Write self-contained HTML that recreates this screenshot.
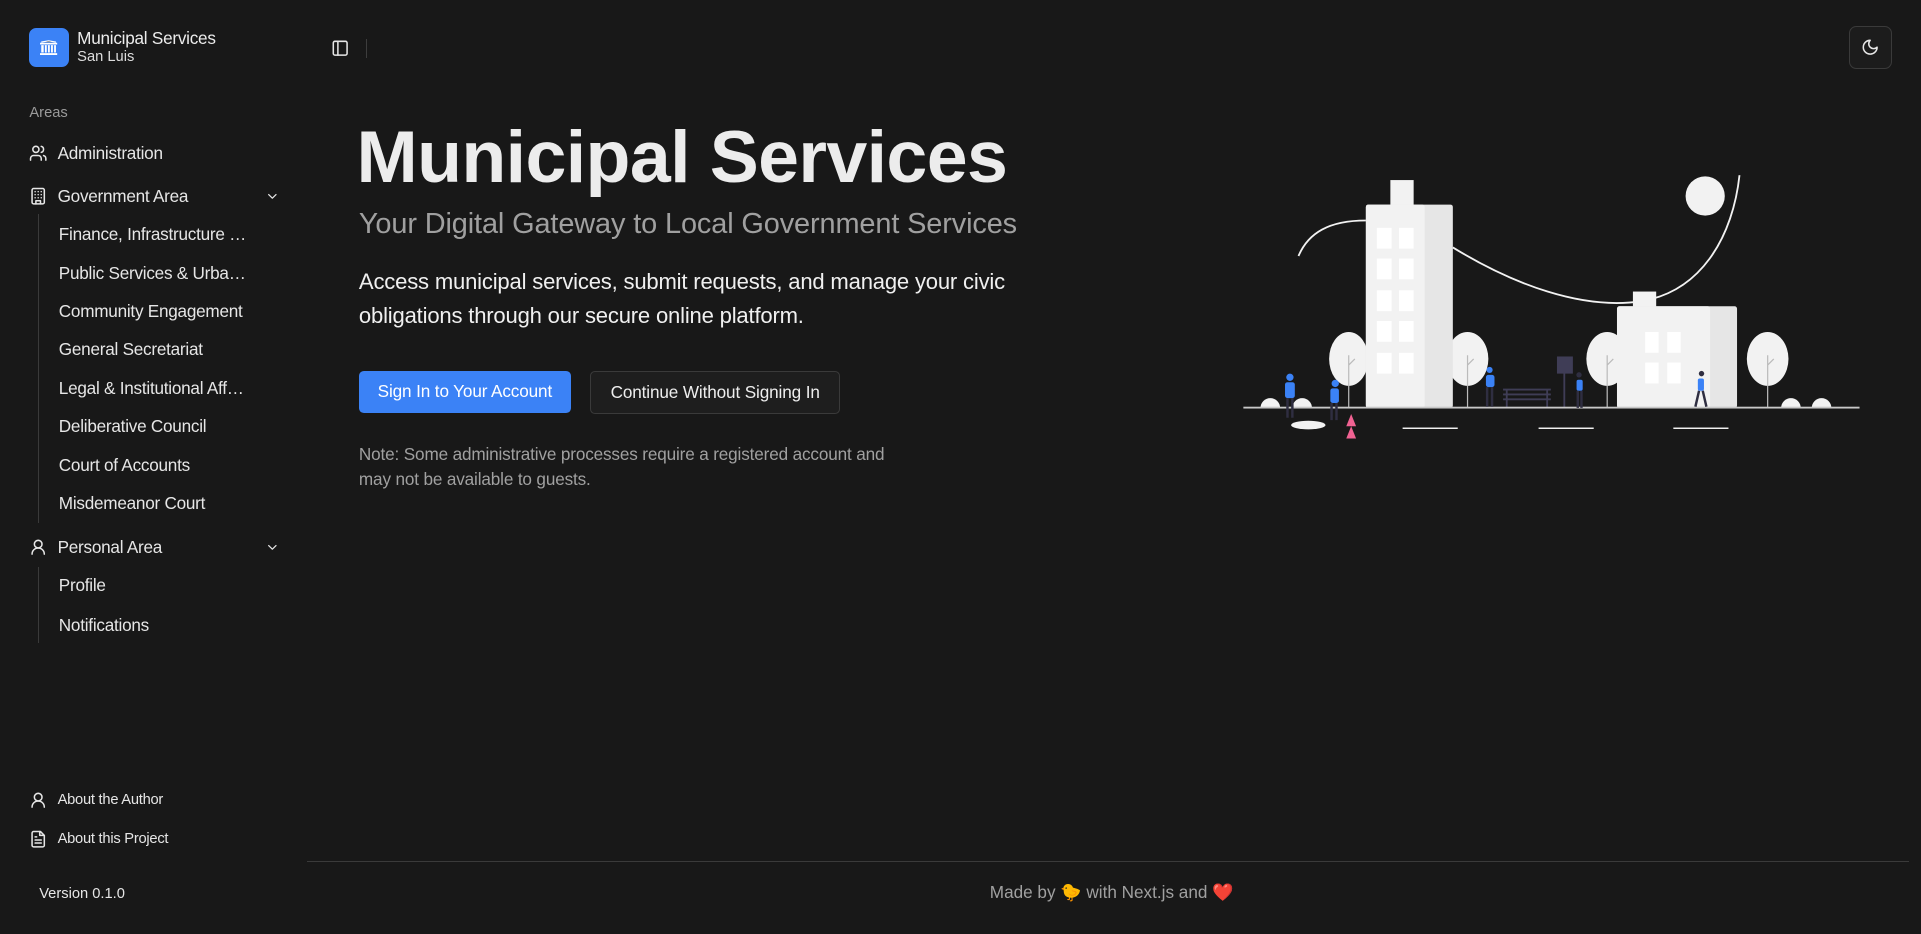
<!DOCTYPE html>
<html><head><meta charset="utf-8">
<style>
html,body{margin:0;padding:0;background:#181818;}
body{zoom:1.225;width:1568px;height:762px;position:relative;overflow:hidden;font-family:"Liberation Sans",sans-serif;color:#e8e8e8;}
.a{position:absolute;white-space:nowrap;}
.side{position:absolute;left:0;top:0;width:251px;height:762px;background:#181818;}
.logo{position:absolute;left:24px;top:23px;width:32px;height:32px;border-radius:6px;background:#3b82f6;}
.it{position:absolute;left:24px;font-size:14px;color:#e6e6e6;display:flex;align-items:center;height:20px;letter-spacing:-0.2px;}
.it svg{width:15px;height:15px;margin-right:8px;}
.sub{position:absolute;left:48px;font-size:14px;color:#e6e6e6;height:20px;line-height:20px;letter-spacing:-0.2px;}
.chev{position:absolute;left:216px;width:12px;height:12px;}
svg.i{fill:none;stroke:#e6e6e6;stroke-width:2;stroke-linecap:round;stroke-linejoin:round;}
</style></head><body>
<div class="side">
  <div class="logo"><svg viewBox="0 0 32 32" width="32" height="32"><path d="M9 12h14v1.5H9zM10 14h12v6H10zM9 20.5h14V22H9z" fill="#fff"/><path d="M12.5 14v6M15 14v6M17.5 14v6M20 14v6" stroke="#3b82f6" stroke-width="1"/><path d="M10 11.5l6-1 6 1" stroke="#fff" stroke-width="1"/></svg></div>
  <div class="a" style="left:63px;top:23px;font-size:14px;color:#ececec;letter-spacing:-0.2px">Municipal Services</div>
  <div class="a" style="left:63px;top:40px;font-size:12px;color:#ddd">San Luis</div>
  <div class="a" style="left:24px;top:86px;font-size:12px;color:#9a9a9a">Areas</div>

  <div class="it" style="top:115px"><svg class="i" viewBox="0 0 24 24"><path d="M16 21v-2a4 4 0 0 0-4-4H6a4 4 0 0 0-4 4v2"/><circle cx="9" cy="7" r="4"/><path d="M22 21v-2a4 4 0 0 0-3-3.87M16 3.13a4 4 0 0 1 0 7.75"/></svg>Administration</div>
  <div class="it" style="top:150px"><svg class="i" viewBox="0 0 24 24"><rect x="4" y="2" width="16" height="20" rx="2"/><path d="M9 22v-4h6v4M8 6h.01M16 6h.01M12 6h.01M12 10h.01M12 14h.01M16 10h.01M16 14h.01M8 10h.01M8 14h.01"/></svg>Government Area</div>
  <svg class="chev i" style="top:154px" viewBox="0 0 24 24"><path d="M6 9l6 6 6-6"/></svg>
  <div class="a" style="left:31px;top:175px;width:1px;height:252px;background:#3a3a3a"></div>
  <div class="sub" style="top:181px">Finance, Infrastructure …</div>
  <div class="sub" style="top:213px">Public Services &amp; Urba…</div>
  <div class="sub" style="top:244px">Community Engagement</div>
  <div class="sub" style="top:275px">General Secretariat</div>
  <div class="sub" style="top:307px">Legal &amp; Institutional Aff…</div>
  <div class="sub" style="top:338px">Deliberative Council</div>
  <div class="sub" style="top:370px">Court of Accounts</div>
  <div class="sub" style="top:401px">Misdemeanor Court</div>

  <div class="it" style="top:437px"><svg class="i" viewBox="0 0 24 24"><circle cx="12" cy="8" r="5"/><path d="M20 21a8 8 0 0 0-16 0"/></svg>Personal Area</div>
  <svg class="chev i" style="top:441px" viewBox="0 0 24 24"><path d="M6 9l6 6 6-6"/></svg>
  <div class="a" style="left:31px;top:463px;width:1px;height:62px;background:#3a3a3a"></div>
  <div class="sub" style="top:468px">Profile</div>
  <div class="sub" style="top:500px">Notifications</div>

  <div class="it" style="top:643px;font-size:12px"><svg class="i" viewBox="0 0 24 24"><circle cx="12" cy="8" r="5"/><path d="M20 21a8 8 0 0 0-16 0"/></svg>About the Author</div>
  <div class="it" style="top:675px;font-size:12px"><svg class="i" viewBox="0 0 24 24"><path d="M15 2H6a2 2 0 0 0-2 2v16a2 2 0 0 0 2 2h12a2 2 0 0 0 2-2V7z"/><path d="M14 2v5h5M16 13H8M16 17H8M10 9H8"/></svg>About this Project</div>
  <div class="a" style="left:32px;top:723px;font-size:12px;color:#e6e6e6">Version 0.1.0</div>
</div>

<svg class="a i" style="left:270px;top:32px;width:15px;height:15px;stroke-width:2" viewBox="0 0 24 24"><rect x="3" y="3" width="18" height="18" rx="2"/><path d="M9 3v18"/></svg>
<div class="a" style="left:299px;top:32px;width:1px;height:15px;background:#3d3d3d"></div>
<div class="a" style="left:1509px;top:21px;width:34px;height:34px;border:1px solid #3a3a3a;border-radius:6px;background:#1c1c1c"></div>
<svg class="a i" style="left:1519px;top:31px;width:15px;height:15px" viewBox="0 0 24 24"><path d="M12 3a6 6 0 0 0 9 9 9 9 0 1 1-9-9z"/></svg>

<div class="a" style="left:291px;top:93px;font-size:60px;font-weight:bold;color:#ececec;letter-spacing:-0.5px">Municipal Services</div>
<div class="a" style="left:293px;top:170px;font-size:23.6px;color:#a0a0a0;letter-spacing:-0.1px">Your Digital Gateway to Local Government Services</div>
<div class="a" style="left:293px;top:216px;font-size:18px;line-height:28px;color:#f0f0f0;letter-spacing:-0.15px">Access municipal services, submit requests, and manage your civic<br>obligations through our secure online platform.</div>
<div class="a" style="left:293px;top:303px;width:173px;height:34px;border-radius:4px;background:#3b82f6;color:#fff;font-size:14px;line-height:34px;text-align:center;letter-spacing:-0.1px">Sign In to Your Account</div>
<div class="a" style="left:482px;top:303px;width:202px;height:33px;border-radius:4px;border:1px solid #3a3a3a;background:#1e1e1e;color:#eee;font-size:14px;line-height:33px;text-align:center;letter-spacing:-0.1px">Continue Without Signing In</div>
<div class="a" style="left:293px;top:361px;font-size:14px;line-height:20px;color:#a0a0a0;letter-spacing:-0.12px">Note: Some administrative processes require a registered account and<br>may not be available to guests.</div>

<svg class="a" style="left:0;top:0;width:1568px;height:762px" viewBox="0 0 1568 762">
  <path d="M1060 209C1068 190 1085 180 1115 180" stroke="#f2f2f2" stroke-width="1.5" fill="none"/>
  <path d="M1186 202C1240 235 1290 250 1330 247C1390 243 1415 190 1420 143" stroke="#f2f2f2" stroke-width="1.5" fill="none"/>
  <circle cx="1392" cy="160" r="16" fill="#f2f2f2"/>
  <g fill="#f2f2f2">
    <ellipse cx="1101" cy="293" rx="16" ry="22"/>
    <ellipse cx="1198" cy="293" rx="17" ry="22"/>
    <ellipse cx="1312" cy="293" rx="17" ry="22"/>
    <ellipse cx="1443" cy="293" rx="17" ry="22"/>
  </g>
  <g stroke="#bbb" stroke-width="1">
    <path d="M1101 290V333M1101 298l5-5M1198 290V333M1198 298l5-5M1312 290V333M1312 298l5-5M1443 290V333M1443 298l5-5"/>
  </g>
  <rect x="1135" y="147" width="19" height="22" fill="#f2f2f2"/>
  <rect x="1115" y="167" width="71" height="166" rx="2" fill="#e6e6e6"/>
  <rect x="1115" y="167" width="48" height="166" rx="2" fill="#f2f2f2"/>
  <g fill="#fff">
    <rect x="1124" y="186" width="12" height="17"/><rect x="1142" y="186" width="12" height="17"/>
    <rect x="1124" y="211" width="12" height="17"/><rect x="1142" y="211" width="12" height="17"/>
    <rect x="1124" y="237" width="12" height="17"/><rect x="1142" y="237" width="12" height="17"/>
    <rect x="1124" y="262" width="12" height="17"/><rect x="1142" y="262" width="12" height="17"/>
    <rect x="1124" y="288" width="12" height="17"/><rect x="1142" y="288" width="12" height="17"/>
  </g>
  <rect x="1333" y="238" width="19" height="14" fill="#f2f2f2"/>
  <rect x="1320" y="250" width="98" height="83" rx="2" fill="#e6e6e6"/>
  <rect x="1320" y="250" width="76" height="83" rx="2" fill="#f2f2f2"/>
  <g fill="#fff">
    <rect x="1343" y="271" width="11" height="17"/><rect x="1361" y="271" width="11" height="17"/>
    <rect x="1343" y="296" width="11" height="17"/><rect x="1361" y="296" width="11" height="17"/>
  </g>
  <g fill="#f2f2f2"><path d="M1029 333a8 8 0 0 1 16 0z"/><path d="M1055 333a8 8 0 0 1 16 0z"/><path d="M1454 333a8 8 0 0 1 16 0z"/><path d="M1479 333a8 8 0 0 1 16 0z"/></g>
  <g stroke="#3f3d56" stroke-width="1.5"><path d="M1227 318h39M1227 322h39M1227 326h39M1230 318v15M1263 318v15M1277 300v33"/></g>
  <rect x="1271" y="291" width="13" height="14" fill="#3f3d56"/>
  <rect x="1015" y="332" width="503" height="1.5" fill="#c8c8c8"/>
  <g fill="#f2f2f2"><rect x="1145" y="349" width="45" height="1.2"/><rect x="1256" y="349" width="45" height="1.2"/><rect x="1366" y="349" width="45" height="1.2"/></g>
  <ellipse cx="1068" cy="347" rx="14" ry="3.5" fill="#f2f2f2"/>
  <g fill="#f06292"><path d="M1103 338l-4 10h8z"/><path d="M1103 348l-4 10h8z"/></g>
  <g fill="#3b82f6">
    <circle cx="1053" cy="308" r="3"/><rect x="1049" y="312" width="8" height="13" rx="2"/>
    <circle cx="1090" cy="313" r="3"/><rect x="1086" y="317" width="7" height="12" rx="2"/>
    <circle cx="1216" cy="302" r="2.5"/><rect x="1213" y="306" width="7" height="10" rx="2"/>
    <rect x="1287" y="310" width="5" height="9" rx="1.5"/>
    <rect x="1386" y="309" width="5" height="10" rx="1.5"/>
  </g>
  <g stroke="#2f2e41" stroke-width="2">
    <path d="M1051 325v16M1055 325v16M1087 329v14M1091 329v14M1214 316v16M1218 316v16M1288 319v14M1291 319v14M1387 319l-3 13M1390 319l3 13"/>
  </g>
  <g fill="#2f2e41"><circle cx="1289" cy="306" r="2.2"/><circle cx="1389" cy="305" r="2.2"/></g>
</svg>

<div class="a" style="left:251px;top:703px;width:1307px;height:1px;background:#3a3a3a"></div>
<div class="a" style="left:808px;top:720px;font-size:14px;color:#a0a0a0">Made by 🐤 with Next.js and ❤️</div>
</body></html>
